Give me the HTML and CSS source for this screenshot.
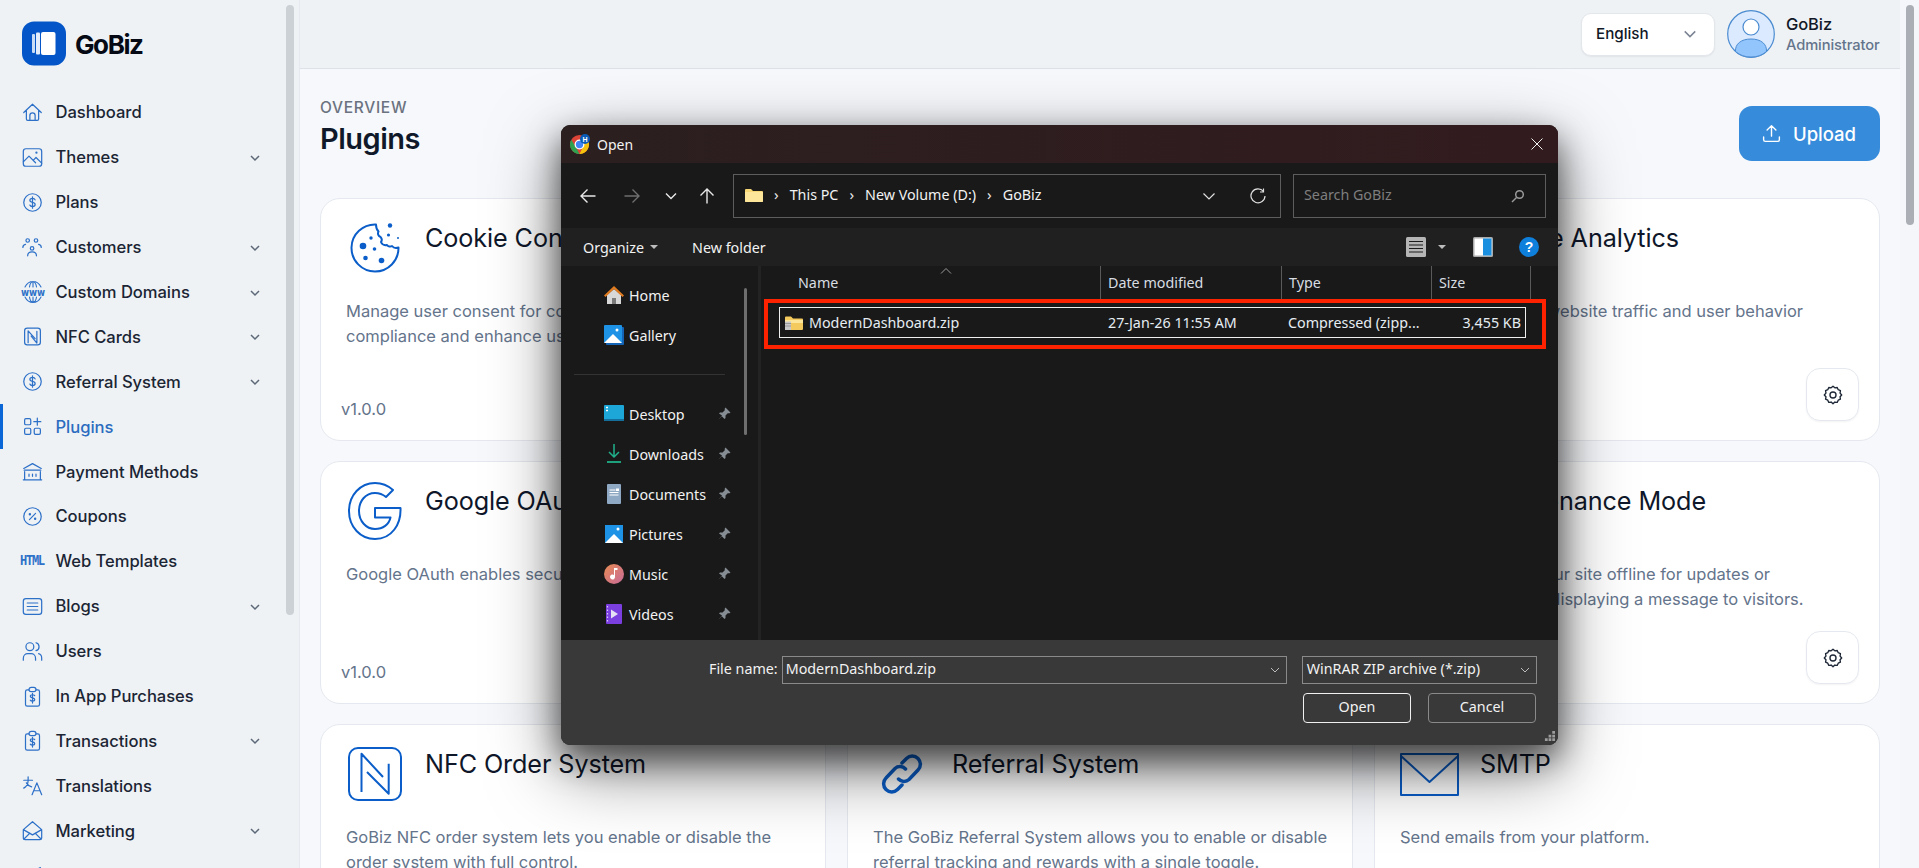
FILE: index.html
```html
<!DOCTYPE html>
<html lang="en">
<head>
<meta charset="utf-8">
<title>Plugins - GoBiz</title>
<link rel="stylesheet" href="styles.css">
</head>
<body>
<div class="app">
  <aside class="sidebar">
    <div class="side-inner">
      <div class="brand">
        <svg class="brand-mark" viewBox="0 0 44 44"><rect width="44" height="44" rx="12" fill="#0456c8"/><rect x="10" y="12.5" width="3" height="19" rx="1" fill="#c9dcf5"/><rect x="14" y="11" width="4" height="22" rx="1" fill="#e3edfb"/><rect x="19" y="10.500" width="14.500" height="23" rx="2" fill="#fff"/></svg>
        <span class="brand-name">GoBiz</span>
      </div>
      <nav class="menu">
        <a class="item"><svg class="mi" viewBox="0 0 24 24"><path d="M5 10v9.500a1.500 1.500 0 0 0 1.500 1.500h11a1.500 1.500 0 0 0 1.500-1.500V10M2 12 12 2.500 22 12M9 21v-5.500a3 3 0 0 1 6 0V21"/></svg><span>Dashboard</span></a>
        <a class="item"><svg class="mi" viewBox="0 0 24 24"><rect x="1.500" y="2" width="21" height="20" rx="3"/><path d="M1.500 17 8 10.500 15.500 18M13 15l3-3 6.500 6.500"/><circle cx="16.500" cy="6.500" r=".6"/></svg><span>Themes</span><svg class="chev" viewBox="0 0 12 12"><path d="M2 4l4 4 4-4"/></svg></a>
        <a class="item"><svg class="mi" viewBox="0 0 24 24"><circle cx="12" cy="12" r="10"/><path d="M15 9c-.4-1.200-1.500-1.800-3-1.800-1.800 0-3 .9-3 2.300s1.100 2 3 2.400 3 1.100 3 2.500-1.200 2.300-3 2.300c-1.500 0-2.600-.6-3-1.800M12 5.500v13"/></svg><span>Plans</span></a>
        <a class="item"><svg class="mi" viewBox="0 0 24 24"><circle cx="6.500" cy="4" r="2"/><circle cx="16" cy="4" r="2"/><circle cx="11.500" cy="13" r="2"/><path d="M1 12c0-2 1.300-3.200 3-3.500M22 12c0-2-1.300-3.200-3-3.500M6.500 21.500c0-3 2-4.500 5-4.500s5 1.500 5 4.500"/></svg><span>Customers</span><svg class="chev" viewBox="0 0 12 12"><path d="M2 4l4 4 4-4"/></svg></a>
        <a class="item"><svg class="mi mi-wide" viewBox="0 0 24 24"><path d="M4 7c1.500-3 4.500-5.500 8-5.500s6.500 2.500 8 5.500M4 17c1.500 3 4.500 5.500 8 5.500s6.500-2.500 8-5.500M8.500 7c.3-2.500 1.500-5 3.500-5.500 2 .5 3.200 3 3.500 5.500M8.500 17c.3 2.500 1.500 5 3.500 5.500 2-.5 3.200-3 3.500-5.500M12 1.500V7M12 17v5.500"/><text class="www" x="12" y="15.500" text-anchor="middle" textLength="24" lengthAdjust="spacingAndGlyphs">www</text></svg><span>Custom Domains</span><svg class="chev" viewBox="0 0 12 12"><path d="M2 4l4 4 4-4"/></svg></a>
        <a class="item"><svg class="mi" viewBox="0 0 24 24"><rect x="3" y="2.500" width="18" height="19" rx="3"/><path d="M7 19V5.500l8 9M17 6v13.500l-6.500-8"/></svg><span>NFC Cards</span><svg class="chev" viewBox="0 0 12 12"><path d="M2 4l4 4 4-4"/></svg></a>
        <a class="item"><svg class="mi" viewBox="0 0 24 24"><circle cx="12" cy="12" r="10"/><path d="M15 9c-.4-1.200-1.500-1.800-3-1.800-1.800 0-3 .9-3 2.300s1.100 2 3 2.400 3 1.100 3 2.500-1.200 2.300-3 2.300c-1.500 0-2.600-.6-3-1.800M12 5.500v13"/></svg><span>Referral System</span><svg class="chev" viewBox="0 0 12 12"><path d="M2 4l4 4 4-4"/></svg></a>
        <a class="item active"><svg class="mi" viewBox="0 0 24 24"><rect x="3" y="3" width="7" height="7" rx="1.500"/><rect x="3" y="14" width="7" height="7" rx="1.500"/><rect x="14" y="14" width="7" height="7" rx="1.500"/><path d="M17.500 2.500v8M13.500 6.500h8"/></svg><span>Plugins</span></a>
        <a class="item"><svg class="mi" viewBox="0 0 24 24"><path d="M2 8.500 12 3l10 5.500M2.500 10.500h19M3 12v9M21 12v9M1.500 21.500h21M8 15v2.500M12 15v2.500M16 15v2.500"/></svg><span>Payment Methods</span></a>
        <a class="item"><svg class="mi" viewBox="0 0 24 24"><circle cx="12" cy="12" r="10"/><path d="M8.500 15.500l7-7"/><circle cx="9" cy="9.500" r=".7"/><circle cx="15" cy="14.500" r=".7"/></svg><span>Coupons</span></a>
        <a class="item"><span class="html-ico">HTML</span><span>Web Templates</span></a>
        <a class="item"><svg class="mi" viewBox="0 0 24 24"><rect x="1.500" y="3" width="21" height="18" rx="3"/><path d="M6 8h12M6 12h12M6 16h12"/></svg><span>Blogs</span><svg class="chev" viewBox="0 0 12 12"><path d="M2 4l4 4 4-4"/></svg></a>
        <a class="item"><svg class="mi" viewBox="0 0 24 24"><circle cx="9" cy="6.500" r="4.500"/><path d="M1.500 22v-2c0-3.500 2.500-5.500 5-5.500h4c2.500 0 5 2 5 5.500v2M16 2c2 .5 3.500 2.200 3.500 4.500S18 10.500 16 11M19 14.500c2 .5 3.500 2.500 3.500 5V22"/></svg><span>Users</span></a>
        <a class="item"><svg class="mi" viewBox="0 0 24 24"><path d="M8 4.500H6a2 2 0 0 0-2 2V21a2 2 0 0 0 2 2h12a2 2 0 0 0 2-2V6.500a2 2 0 0 0-2-2h-2"/><rect x="8" y="1.500" width="8" height="5" rx="2.500"/><path d="M14.500 11c-.4-.7-1.300-1-2.500-1-1.500 0-2.500.7-2.500 1.800s1 1.600 2.500 1.800 2.500.8 2.500 1.900-1 1.800-2.500 1.800c-1.200 0-2.100-.4-2.500-1.100M12 8.500v11"/></svg><span>In App Purchases</span></a>
        <a class="item"><svg class="mi" viewBox="0 0 24 24"><path d="M8 4.500H6a2 2 0 0 0-2 2V21a2 2 0 0 0 2 2h12a2 2 0 0 0 2-2V6.500a2 2 0 0 0-2-2h-2"/><rect x="8" y="1.500" width="8" height="5" rx="2.500"/><path d="M14.500 11c-.4-.7-1.300-1-2.500-1-1.500 0-2.500.7-2.500 1.800s1 1.600 2.500 1.800 2.500.8 2.500 1.900-1 1.800-2.500 1.800c-1.200 0-2.100-.4-2.500-1.100M12 8.500v11"/></svg><span>Transactions</span><svg class="chev" viewBox="0 0 12 12"><path d="M2 4l4 4 4-4"/></svg></a>
        <a class="item"><svg class="mi" viewBox="0 0 24 24"><path d="M2 6h10M7 2v4c0 4-1.500 7-5 9M5 9c1 2 3 3.500 6 4.500M11.500 22.500 17 9l5.500 13.500M13.500 18h7"/></svg><span>Translations</span></a>
        <a class="item"><svg class="mi" viewBox="0 0 24 24"><path d="M1.500 11 12 2l10.500 9v9.500a2 2 0 0 1-2 2h-17a2 2 0 0 1-2-2zM1.500 11 12 17l10.500-6M2 22l7-7M22 22l-7-7"/></svg><span>Marketing</span><svg class="chev" viewBox="0 0 12 12"><path d="M2 4l4 4 4-4"/></svg></a>
        <a class="item"><svg class="mi" viewBox="0 0 24 24"><path d="M3 12l18-9-4 18-5-6z"/></svg></a>
      </nav>
    </div>
    <div class="side-scroll"><div class="side-thumb"></div></div>
  </aside>

  <main class="main">
    <header class="topbar">
      <div class="lang"><span class="lang-text">English</span><svg class="lang-chev" viewBox="0 0 16 16"><path d="M2 5l6 6 6-6"/></svg></div>
      <svg class="avatar" viewBox="0 0 48 48"><circle cx="24" cy="24" r="23.300" fill="#dbeafe" stroke="#4a8bd0" stroke-width="1.200"/><path d="M8.500 41.500C8 34 14 29 24 29s16 5 15.500 12.500A23 23 0 0 1 24 47a23 23 0 0 1-15.500-5.500z" fill="#93c5fd" stroke="#4a8bd0" stroke-width="1"/><circle cx="24" cy="17" r="8" fill="#fff" stroke="#4a8bd0" stroke-width="1.200"/></svg>
      <div class="who"><div class="who-name">GoBiz</div><div class="who-role">Administrator</div></div>
    </header>

    <section class="content">
      <div class="page-head">
        <div>
          <div class="eyebrow">OVERVIEW</div>
          <h1 class="page-title">Plugins</h1>
        </div>
        <button class="upload"><svg class="upload-ico" viewBox="0 0 24 24"><path d="M12 15V3M7 8l5-5 5 5M3 16v3a2 2 0 0 0 2 2h14a2 2 0 0 0 2-2v-3"/></svg>Upload</button>
      </div>

      <div class="cards">
        <article class="card">
          <div class="card-head">
            <div class="card-ico"><svg class="ico-cookie" viewBox="0 0 50 50"><path class="ln" d="M26 1.500a23.500 23.500 0 1 0 22.500 23c-2.500 1-5 .5-6.500-1.500-1.500 1-4 .7-5-1-2.500.5-5-.5-6-3 1-1.500 1-3.500-.5-5-2.500-1-3-3.500-2-5.500-1.500-1.500-2.500-4-2.500-7z"/><circle class="dt" cx="13" cy="23" r="3.300"/><circle class="dt" cx="21" cy="15" r="1.700"/><circle class="dt" cx="24.500" cy="26" r="1.800"/><circle class="dt" cx="15.500" cy="35" r="2.300"/><circle class="dt" cx="31.500" cy="37.500" r="2.800"/><circle class="dt" cx="40" cy="2.500" r="2.200"/><circle class="dt" cx="38.500" cy="12" r="1.600"/><circle class="dt" cx="48" cy="15" r="1"/></svg></div>
            <h2 class="card-title">Cookie Consent</h2>
          </div>
          <p class="card-desc">Manage user consent for cookies to ensure legal<br>compliance and enhance user trust.</p>
          <div class="card-foot"><span class="ver">v1.0.0</span></div>
        </article>
        <article class="card"></article>
        <article class="card">
          <div class="card-head">
            <div class="card-ico"></div>
            <h2 class="card-title">Google Analytics</h2>
          </div>
          <p class="card-desc">Track and analyze website traffic and user behavior<br>in real time.</p>
          <div class="card-foot"><span class="ver">v1.0.0</span><button class="gear-btn"><svg class="gear" viewBox="0 0 24 24"><path d="M12 2.500l2 1.700 2.600-.4 1.100 2.400 2.400 1.100-.4 2.600 1.800 2.100-1.800 2 .4 2.600-2.400 1.100-1.100 2.400-2.600-.4-2 1.800-2-1.800-2.600.4-1.100-2.400-2.400-1.100.4-2.600-1.800-2 1.800-2.100-.4-2.600 2.400-1.100 1.100-2.400 2.600.4z"/><circle cx="12" cy="12" r="3.300"/></svg></button></div>
        </article>

        <article class="card">
          <div class="card-head">
            <div class="card-ico"><svg class="ico-g" viewBox="0 0 54 60"><path class="ln" d="M27 2c7 0 13 2.500 18 7l-7 7c-3-2.500-7-4-11-4-9.500 0-16 8-16 18s7 18 16 18c8 0 14-4.500 15.500-11.500H27V27h25.500c.7 16-8.500 31-25.500 31C12.500 58 1 46 1 30S12.500 2 27 2z"/></svg></div>
            <h2 class="card-title">Google OAuth</h2>
          </div>
          <p class="card-desc">Google OAuth enables secure sign-in for your users.</p>
          <div class="card-foot"><span class="ver">v1.0.0</span></div>
        </article>
        <article class="card"></article>
        <article class="card">
          <div class="card-head">
            <div class="card-ico"></div>
            <h2 class="card-title">Maintenance Mode</h2>
          </div>
          <p class="card-desc">Temporarily take your site offline for updates or<br>maintenance while displaying a message to visitors.</p>
          <div class="card-foot"><span class="ver">v1.0.0</span><button class="gear-btn"><svg class="gear" viewBox="0 0 24 24"><path d="M12 2.500l2 1.700 2.600-.4 1.100 2.400 2.400 1.100-.4 2.600 1.800 2.100-1.800 2 .4 2.600-2.400 1.100-1.100 2.400-2.600-.4-2 1.800-2-1.800-2.600.4-1.100-2.400-2.400-1.100.4-2.600-1.800-2 1.800-2.100-.4-2.600 2.400-1.100 1.100-2.400 2.600.4z"/><circle cx="12" cy="12" r="3.300"/></svg></button></div>
        </article>

        <article class="card">
          <div class="card-head">
            <div class="card-ico"><svg class="ico-nfc" viewBox="0 0 54 54"><rect class="ln" x="1" y="1" width="52" height="52" rx="9"/><path class="ln" d="M13.500 45V6.700L35 30M40.700 16.700v30L19 25"/></svg></div>
            <h2 class="card-title">NFC Order System</h2>
          </div>
          <p class="card-desc">GoBiz NFC order system lets you enable or disable the<br>order system with full control.</p>
        </article>
        <article class="card">
          <div class="card-head">
            <div class="card-ico"><svg class="ico-link" viewBox="0 0 42 42"><path class="ln-thick" d="M17.500 26a7.500 7.500 0 0 0 10.500.500l9-9.500a8 8 0 0 0-11.500-11.500L21 10M24.500 16a7.500 7.500 0 0 0-10.500-.5l-9 9.500a8 8 0 0 0 11.500 11.500L21 32"/></svg></div>
            <h2 class="card-title">Referral System</h2>
          </div>
          <p class="card-desc">The GoBiz Referral System allows you to enable or disable<br>referral tracking and rewards with a single toggle.</p>
        </article>
        <article class="card">
          <div class="card-head">
            <div class="card-ico"><svg class="ico-mail" viewBox="0 0 59 43"><rect class="ln" x="1" y="1" width="57" height="41"/><path class="ln" d="M1 3l28.500 26L58 3"/></svg></div>
            <h2 class="card-title">SMTP</h2>
          </div>
          <p class="card-desc">Send emails from your platform.</p>
        </article>
      </div>
    </section>
  </main>

  <div class="page-scroll"><div class="page-thumb"></div></div>
</div>

<div class="dialog">
  <div class="d-title">
    <svg class="chrome" viewBox="0 0 20 20"><circle cx="9.500" cy="10.500" r="9.500" fill="#db4437"/><path d="M9.500 20A9.500 9.500 0 0 1 1.300 5.700L6 13.500z" fill="#2fa04f"/><path d="M9.500 20a9.500 9.500 0 0 0 8.200-14.300H9.500l3.500 7z" fill="#f4c20d"/><circle cx="9.500" cy="10.500" r="4.300" fill="#4285f4" stroke="#fff" stroke-width="1.300"/><circle cx="15" cy="5" r="5" fill="#0a5bb5"/><text class="badge-h" x="15" y="7.500" text-anchor="middle">H</text></svg>
    <span class="d-title-text">Open</span>
    <svg class="d-close" viewBox="0 0 12 12"><path d="M.5.500l11 11M11.500.500l-11 11"/></svg>
  </div>

  <div class="d-nav">
    <svg class="n-ico n-back" viewBox="0 0 16 16"><path d="M15.500 8H1M7.500 1.500 1 8l6.500 6.500"/></svg>
    <svg class="n-ico n-fwd" viewBox="0 0 16 16"><path d="M.5 8H15M8.500 1.500 15 8l-6.500 6.500"/></svg>
    <svg class="n-chev" viewBox="0 0 12 12"><path d="M1 3.500l5 5 5-5"/></svg>
    <svg class="n-ico n-up" viewBox="0 0 16 16"><path d="M8 15.500V1M1.500 7.500 8 1l6.500 6.500"/></svg>
    <div class="addr">
      <svg class="f-ico" viewBox="0 0 18 14"><path d="M0 2a1 1 0 0 1 1-1h5l2 2h9a1 1 0 0 1 1 1v9a1 1 0 0 1-1 1H1a1 1 0 0 1-1-1z" fill="#f8d775"/><path d="M0 4h18v9a1 1 0 0 1-1 1H1a1 1 0 0 1-1-1z" fill="#fde69a"/></svg>
      <span class="crumb-sep">›</span><span class="crumb">This PC</span><span class="crumb-sep">›</span><span class="crumb">New Volume (D:)</span><span class="crumb-sep">›</span><span class="crumb">GoBiz</span>
      <svg class="addr-chev" viewBox="0 0 12 12"><path d="M.5 3.500l5.500 5.500 5.500-5.500"/></svg>
      <svg class="addr-refresh" viewBox="0 0 16 16"><path d="M13.500 3.500A7 7 0 1 0 15 8M13.500.500v3.500H10"/></svg>
    </div>
    <div class="search"><span class="crumb">Search GoBiz</span><svg class="search-ico" viewBox="0 0 14 14"><circle cx="8.500" cy="5.500" r="3.800"/><path d="M5.500 8.500 1 13"/></svg></div>
  </div>

  <div class="d-tools">
    <span class="tool">Organize</span><i class="caret"></i>
    <span class="tool tool-new">New folder</span>
    <svg class="view-ico" viewBox="0 0 20 20"><rect width="20" height="20" rx="1.500" fill="#b5b5b5"/><path d="M3 4.500h14M3 8h14M3 11.500h14M3 15h14" stroke="#1c1c1c" stroke-width="1.200"/></svg>
    <i class="caret caret-view"></i>
    <svg class="pane-ico" viewBox="0 0 20 20"><rect width="20" height="20" rx="1.500" fill="#aaa"/><rect x="1.500" y="1.500" width="17" height="17" fill="#fff"/><rect x="10" y="1.500" width="8.500" height="17" fill="#1a8fe0"/></svg>
    <svg class="help-ico" viewBox="0 0 20 20"><circle cx="10" cy="10" r="10" fill="#0f7fdc"/><text class="help-q" x="10" y="15" text-anchor="middle">?</text></svg>
  </div>

  <div class="d-body">
    <div class="d-side">
      <div class="s-item"><svg class="s-ico" viewBox="0 0 20 20"><path d="M3 10v9h14v-9l-7-6z" fill="#d8d8d8"/><path d="M8 19v-6h4v6z" fill="#7a7a7a"/><path d="M0 10.500 10 1l10 9.500-1.500 1.500L10 4l-8.500 8z" fill="#e07b1f"/></svg><span>Home</span></div>
      <div class="s-item"><svg class="s-ico" viewBox="0 0 20 20"><rect x="2" y="2" width="18" height="18" rx="1" fill="#1464b8"/><rect width="18" height="18" rx="1" fill="#1e93e6"/><path d="M0 18 9 9l9 9z" fill="#fff"/><circle cx="13" cy="5" r="1.500" fill="#fff"/></svg><span>Gallery</span></div>
      <div class="s-sep"></div>
      <div class="s-item"><svg class="s-ico" viewBox="0 0 20 20"><rect y="1" width="20" height="16" rx="1" fill="#1da7d8"/><rect y="15" width="20" height="2" fill="#146f9c"/><path d="M2 3.500h2M2 6.500h2" stroke="#fff" stroke-width="1.500"/></svg><span>Desktop</span><svg class="pin" viewBox="0 0 14 14"><path d="M8.500.5 13.500 5.500 12 6.500 11 6 8.500 8.500 8.500 11 7.500 12 4.800 9.200 1.300 12.700 5 8.400 2 6.500 3 5.500 5.500 5.500 8 3 7.500 2z"/></svg></div>
      <div class="s-item"><svg class="s-ico" viewBox="0 0 20 20"><path d="M10 0v12M5 8l5 5 5-5" fill="none" stroke="#20b08a" stroke-width="1.500"/><path d="M3 18h14" stroke="#20b08a" stroke-width="1.800"/></svg><span>Downloads</span><svg class="pin" viewBox="0 0 14 14"><path d="M8.500.5 13.500 5.500 12 6.500 11 6 8.500 8.500 8.500 11 7.500 12 4.800 9.200 1.300 12.700 5 8.400 2 6.500 3 5.500 5.500 5.500 8 3 7.500 2z"/></svg></div>
      <div class="s-item"><svg class="s-ico" viewBox="0 0 20 20"><rect x="3" width="14" height="20" rx="1" fill="#8fa8c4"/><path d="M5.500 6h6M5.500 8.500h9M5.500 11h9" stroke="#fff" stroke-width="1"/><rect x="12" y="4.500" width="3" height="2.500" fill="#fff"/></svg><span>Documents</span><svg class="pin" viewBox="0 0 14 14"><path d="M8.500.5 13.500 5.500 12 6.500 11 6 8.500 8.500 8.500 11 7.500 12 4.800 9.200 1.300 12.700 5 8.400 2 6.500 3 5.500 5.500 5.500 8 3 7.500 2z"/></svg></div>
      <div class="s-item"><svg class="s-ico" viewBox="0 0 20 20"><rect x="1" y="1" width="18" height="18" fill="#1e93e6"/><path d="M1 19l9-9 9 9z" fill="#fff"/><circle cx="14" cy="5" r="1.500" fill="#fff"/></svg><span>Pictures</span><svg class="pin" viewBox="0 0 14 14"><path d="M8.500.5 13.500 5.500 12 6.500 11 6 8.500 8.500 8.500 11 7.500 12 4.800 9.200 1.300 12.700 5 8.400 2 6.500 3 5.500 5.500 5.500 8 3 7.500 2z"/></svg></div>
      <div class="s-item"><svg class="s-ico" viewBox="0 0 20 20"><defs><linearGradient id="mg" x1="0" y1="0" x2="1" y2="1"><stop offset="0" stop-color="#e88b52"/><stop offset="1" stop-color="#c76a9a"/></linearGradient></defs><circle cx="10" cy="10" r="10" fill="url(#mg)"/><path d="M10 4h3.500v2H11v7a2.500 2.500 0 1 1-1-2z" fill="#fff"/></svg><span>Music</span><svg class="pin" viewBox="0 0 14 14"><path d="M8.500.5 13.500 5.500 12 6.500 11 6 8.500 8.500 8.500 11 7.500 12 4.800 9.200 1.300 12.700 5 8.400 2 6.500 3 5.500 5.500 5.500 8 3 7.500 2z"/></svg></div>
      <div class="s-item"><svg class="s-ico" viewBox="0 0 20 20"><rect x="2" width="16" height="20" rx="1" fill="#7b3fe0"/><path d="M7 5.500v9l7-4.500z" fill="#e6e0f5"/><path d="M3.500 2v16" stroke="#d5c4f5" stroke-width="1.200" stroke-dasharray="1.500 2"/></svg><span>Videos</span><svg class="pin" viewBox="0 0 14 14"><path d="M8.500.5 13.500 5.500 12 6.500 11 6 8.500 8.500 8.500 11 7.500 12 4.800 9.200 1.300 12.700 5 8.400 2 6.500 3 5.500 5.500 5.500 8 3 7.500 2z"/></svg></div>
      <div class="s-thumb"></div>
    </div>
    <div class="d-split"></div>
    <div class="d-list">
      <svg class="sort-caret" viewBox="0 0 12 6"><path d="M1 5.500 6 .5l5 5"/></svg>
      <div class="l-head">
        <div class="l-col l-name">Name</div>
        <div class="l-col l-sep">Date modified</div>
        <div class="l-col l-sep">Type</div>
        <div class="l-col l-sep">Size</div>
        <div class="l-col l-sep l-end"></div>
      </div>
      <div class="l-row">
        <div class="r-name"><svg class="zip-ico" viewBox="0 0 18 14"><path d="M0 1.500a1 1 0 0 1 1-1h5l2 2h9a1 1 0 0 1 1 1v9.500a1 1 0 0 1-1 1H1a1 1 0 0 1-1-1z" fill="#f4c95d"/><path d="M0 4h18v3H0z" fill="#fde69a"/><rect y="5.500" width="6" height="8.500" fill="#c9c9c9"/><path d="M0 7.500h6M0 10h6" stroke="#8e8e8e" stroke-width=".8"/></svg><span>ModernDashboard.zip</span></div>
        <div class="r-cell">27-Jan-26 11:55 AM</div>
        <div class="r-cell">Compressed (zipp...</div>
        <div class="r-size">3,455 KB</div>
      </div>
      <div class="marker"></div>
    </div>
  </div>

  <div class="d-foot">
    <div class="f-line">
      <span class="f-label">File name:</span>
      <div class="f-input"><span class="crumb">ModernDashboard.zip</span><svg class="f-chev" viewBox="0 0 10 10"><path d="M1 3l4 4 4-4"/></svg></div>
      <div class="f-filter"><span class="crumb">WinRAR ZIP archive (*.zip)</span><svg class="f-chev" viewBox="0 0 10 10"><path d="M1 3l4 4 4-4"/></svg></div>
    </div>
    <div class="f-actions">
      <button class="d-btn d-btn-main">Open</button>
      <button class="d-btn">Cancel</button>
    </div>
    <svg class="grip" viewBox="0 0 12 12"><path d="M9 0h3v3H9zM5 4h3v3H5zM9 4h3v3H9zM1 8h3v3H1zM5 8h3v3H5zM9 8h3v3H9z"/></svg>
  </div>
</div>
</body>
</html>
```

FILE: styles.css
```css
* { box-sizing: border-box; }
html, body { margin: 0; height: 100%; overflow: hidden; }
body { font-family: Inter, "Noto Sans", sans-serif; background: #f6f8fb; color: #0f172a; }
p, h1, h2 { margin: 0; }
button { font-family: inherit; }

.app { display: flex; height: 868px; overflow: hidden; }

/* sidebar */
.sidebar { flex: 0 0 300px; display: flex; background: #eef2f5; border-right: 1px solid #e6eaf0; overflow: hidden; }
.side-inner { flex: 1; min-width: 0; }
.side-scroll { flex: 0 0 13px; padding: 5px 5px 0 0; }
.side-thumb { width: 8px; height: 610px; border-radius: 4px; background: #ccd1d6; }
.brand { display: flex; gap: 9px; padding: 21px 0 0 22px; height: 90px; align-items: flex-start; }
.brand-mark { width: 44px; height: 45px; display: block; }
.brand-name { font-size: 26px; font-weight: 700; color: #050a14; letter-spacing: -1.400px; line-height: 47px; }
.menu { display: flex; flex-direction: column; }
.item { height: 44.900px; display: flex; align-items: center; padding-left: 22px; font-size: 16.600px; font-weight: 500; color: #1b2534; position: relative; flex: none; letter-spacing: -.05px; }
.item > span { margin-left: 12.500px; }
.mi { width: 21px; height: 21px; fill: none; stroke: #2d70c8; stroke-width: 1.400; stroke-linecap: round; stroke-linejoin: round; flex: none; }
.mi-wide { width: 24px; height: 24px; margin: 0 -1.500px; stroke-width: 1.100; overflow: visible; }
.www { font: 700 10px "DejaVu Sans", sans-serif; fill: #2d70c8; stroke: none; }
.item .html-ico { margin: 0 -2px; width: 25px; flex: none; font: 700 12px/1 "Liberation Mono", monospace; letter-spacing: -1.200px; color: #2d70c8; transform: scaleY(1.250); }
.html-ico + span { margin-left: 12.500px; }
.chev { position: absolute; left: 249px; top: 17px; width: 12px; height: 12px; fill: none; stroke: #5c6878; stroke-width: 1.500; }
.item.active { color: #2b6cc0; }
.item.active::before { content: ""; position: absolute; left: 0; top: 0; bottom: 0; width: 3px; background: #0b66d6; }

/* main */
.main { flex: 1; min-width: 0; display: flex; flex-direction: column; overflow: hidden; }
.page-scroll { flex: 0 0 19px; background: #f5f6f9; padding: 5px 0 0 6px; }
.page-thumb { width: 8px; height: 220px; border-radius: 4px; background: #abafb5; }
.topbar { flex: 0 0 69px; background: #eef2f5; border-bottom: 1px solid #dde2e8; display: flex; align-items: center; justify-content: flex-end; padding: 0 20px 0 0; }
.lang { width: 134px; height: 43px; background: #fff; border: 1px solid #e3e7ec; border-radius: 10px; box-shadow: 0 1px 2px rgba(15,23,42,.06); display: flex; align-items: center; justify-content: space-between; padding: 0 17px 0 14px; font-size: 15.200px; font-weight: 500; color: #111827; }
.lang-text { position: relative; top: -1px; }
.lang-chev { width: 14px; height: 14px; fill: none; stroke: #7b8494; stroke-width: 1.700; }
.avatar { width: 48px; height: 48px; margin: 0 11px 0 12px; display: block; }
.who { width: 94px; padding-top: 1px; }
.who-name { font-size: 16.500px; font-weight: 500; line-height: 21px; color: #111827; letter-spacing: -.1px; }
.who-role { font-size: 14.700px; font-weight: 500; line-height: 20px; color: #64748b; white-space: nowrap; letter-spacing: -.1px; }

.content { flex: 1; padding: 37px 20px 0 20px; overflow: hidden; min-height: 0; }
.page-head { display: flex; justify-content: space-between; align-items: flex-start; height: 55px; margin-bottom: 37px; }
.eyebrow { font-size: 15.500px; font-weight: 500; color: #6b7280; letter-spacing: .7px; line-height: 18px; margin-top: -7px; }
.page-title { font-size: 29px; font-weight: 600; line-height: 36px; color: #10192a; letter-spacing: -.5px; margin-top: 4px; }
.upload { width: 141px; height: 55px; border: 0; border-radius: 13px; background: #368bdb; color: #fff; font-size: 18.500px; font-weight: 500; display: flex; align-items: center; justify-content: center; gap: 11px; padding: 0 2px 0 0; }
.upload-ico { width: 21px; height: 21px; fill: none; stroke: #fff; stroke-width: 1.600; stroke-linecap: round; stroke-linejoin: round; }

.cards { display: grid; grid-template-columns: repeat(3, 1fr); grid-auto-rows: 243px; gap: 20px 21px; }
.card { background: #fff; border: 1px solid #e5e9ef; border-radius: 20px; padding: 22px 20px 19px; display: flex; flex-direction: column; overflow: hidden; }
.card-head { display: flex; flex: none; height: 54px; }
.card-ico { flex: 0 0 58px; margin: 0 21px 0 5px; height: 54px; display: flex; align-items: center; justify-content: center; }
.card-ico svg { display: block; flex: none; }
.ln { fill: none; stroke: #0b5ec9; stroke-width: 2; stroke-linejoin: round; }
.ln-thick { fill: none; stroke: #0b5ec9; stroke-width: 3.500; stroke-linecap: round; }
.dt { fill: #0b5ec9; }
.ico-cookie { width: 50px; height: 50px; }
.ico-g { width: 54px; height: 60px; }
.ico-nfc { width: 54px; height: 54px; }
.ico-link { width: 42px; height: 42px; }
.ico-mail { width: 59px; height: 43px; }
.card-title { font-size: 25.200px; font-weight: 400; line-height: 34px; color: #0f172a; white-space: nowrap; letter-spacing: -.1px; }
.card-desc { margin: 23.500px 0 0 5px; font-size: 16.500px; line-height: 25px; color: #64748b; white-space: nowrap; flex: none; }
.card-foot { margin-top: auto; display: flex; justify-content: space-between; align-items: flex-end; }
.ver { font-size: 16.500px; line-height: 24px; color: #64748b; }
.gear-btn { width: 53px; height: 53px; border: 1px solid #e5e9ef; border-radius: 14px; background: #fff; display: flex; align-items: center; justify-content: center; padding: 0; box-shadow: 0 1px 2px rgba(15,23,42,.05); }
.gear { width: 22px; height: 22px; fill: none; stroke: #1f2937; stroke-width: 1.500; stroke-linejoin: round; }

/* windows dialog: floating window over the page */
.dialog { position: absolute; left: 561px; top: 125px; width: 997px; height: 620px; background: #191919; border-radius: 9px; display: flex; flex-direction: column; box-shadow: 0 14px 32px rgba(0,0,0,.55), 0 24px 70px rgba(0,0,0,.5); font-family: "Noto Sans", sans-serif; font-size: 14.300px; color: #f2f2f2; }
.d-title { flex: 0 0 38px; background: linear-gradient(90deg, #2b1f1f, #321b1e); border-radius: 9px 9px 0 0; display: flex; align-items: center; padding: 0 15px 0 9px; }
.chrome { width: 20px; height: 20px; flex: none; }
.badge-h { font: 700 7px "Liberation Sans", sans-serif; fill: #fff; }
.d-title-text { margin-left: 7px; font-size: 14px; }
.d-close { width: 12px; height: 12px; margin-left: auto; fill: none; stroke: #f0f0f0; stroke-width: 1; }

.d-nav { flex: 0 0 65px; display: flex; align-items: center; padding: 0 12px 0 19px; background: #191919; }
.n-ico { width: 16px; height: 16px; flex: none; fill: none; stroke: #e8e8e8; stroke-width: 1.400; }
.n-fwd { margin-left: 28px; stroke: #6f6f6f; }
.n-chev { width: 12px; height: 12px; margin-left: 25px; fill: none; stroke: #e8e8e8; stroke-width: 1.400; flex: none; }
.n-up { margin-left: 22px; }
.addr { margin-left: 18px; width: 548px; height: 44px; border: 1px solid #5d5d5d; display: flex; align-items: center; padding-left: 11px; }
.crumb { position: relative; top: -1.500px; white-space: nowrap; }
.f-ico { width: 18px; height: 14px; flex: none; position: relative; top: -1px; }
.crumb-sep { margin: 0 11px; font-size: 15px; line-height: 1; color: #e8e8e8; position: relative; top: -1.500px; }
.f-ico + .crumb-sep { margin-left: 11px; }
.addr-chev { width: 12px; height: 12px; margin-left: auto; fill: none; stroke: #e0e0e0; stroke-width: 1.200; }
.addr-refresh { width: 16px; height: 16px; margin: 0 14px 0 35px; fill: none; stroke: #e0e0e0; stroke-width: 1.200; }
.search { margin-left: 12px; width: 253px; height: 44px; border: 1px solid #5d5d5d; display: flex; align-items: center; justify-content: space-between; padding: 0 20px 0 10px; color: #7e7e7e; }
.search-ico { width: 14px; height: 14px; fill: none; stroke: #9a9a9a; stroke-width: 1.500; }

.d-tools { flex: 0 0 38px; background: #202020; display: flex; align-items: center; padding: 0 19px 0 22px; }
.tool { white-space: nowrap; }
.caret { width: 0; height: 0; margin-left: 6px; border: 4px solid transparent; border-top: 4px solid #bdbdbd; border-bottom: 0; flex: none; }
.tool-new { margin-left: 34px; }
.view-ico { width: 20px; height: 20px; margin-left: auto; flex: none; }
.caret-view { margin-left: 12px; }
.pane-ico { width: 20px; height: 20px; margin-left: 27px; flex: none; }
.help-ico { width: 20px; height: 20px; margin-left: 26px; flex: none; }
.help-q { font: 700 14px "Liberation Sans", sans-serif; fill: #fff; }

.d-body { flex: 0 0 374px; display: flex; background: #191919; min-height: 0; }
.d-side { flex: 0 0 197px; padding-top: 9px; position: relative; }
.s-item { height: 40px; display: flex; align-items: center; padding: 0 8px 0 43px; }
.s-ico { width: 20px; height: 20px; flex: none; margin-right: 5px; }
.pin { width: 14px; height: 14px; margin-left: auto; margin-right: 19px; fill: #868d94; flex: none; }
.s-sep { height: 1px; background: #333; margin: 19px 33px 19px 13px; }
.s-thumb { position: absolute; left: 183px; top: 22px; width: 3px; height: 147px; border-radius: 2px; background: #6e6e6e; }
.d-split { flex: 0 0 3px; background: #232323; }
.d-list { flex: 1; min-width: 0; position: relative; }
.sort-caret { position: absolute; left: 179px; top: 2px; width: 12px; height: 6px; fill: none; stroke: #9a9a9a; stroke-width: 1; }
.l-head { height: 33px; display: grid; grid-template-columns: 339px 181px 150px 99px 27px; color: #d8dde2; }
.l-col { display: flex; align-items: center; padding: 1px 0 0 7px; line-height: 1; }
.l-name { padding-left: 37px; }
.l-sep { border-left: 1px solid #5a5a5a; }
.l-row { margin: 8px 0 0 18px; width: 747px; height: 31px; border: 1px solid #f0f0f0; display: grid; grid-template-columns: 320px 180px 150px 95px; align-items: center; color: #e6edf3; }
.r-name { display: flex; align-items: center; padding-left: 5px; gap: 6px; }
.zip-ico { width: 18px; height: 14px; flex: none; }
.r-cell { padding-left: 8px; white-space: nowrap; }
.r-size { text-align: right; padding-right: 4px; white-space: nowrap; }
.marker { position: absolute; left: 3px; top: 33px; width: 782px; height: 50px; border: 4px solid #ff2200; pointer-events: none; }

.d-foot { flex: 1; background: #393939; border-radius: 0 0 9px 9px; position: relative; padding: 16px 21px 0 0; }
.f-line { display: flex; align-items: center; height: 28px; }
.f-label { margin: 0 4px 0 148px; white-space: nowrap; position: relative; top: -1.500px; }
.f-input { width: 505px; height: 28px; border: 1px solid #8a8a8a; display: flex; align-items: center; justify-content: space-between; padding: 0 6px 0 3px; }
.f-filter { margin-left: 15px; width: 235px; height: 28px; border: 1px solid #8a8a8a; display: flex; align-items: center; justify-content: space-between; padding: 0 6px 0 4px; }
.f-chev { width: 10px; height: 10px; fill: none; stroke: #bdbdbd; stroke-width: 1; flex: none; }
.f-actions { display: flex; justify-content: flex-end; gap: 17px; margin: 9px 1px 0 0; }
.d-btn { width: 108px; height: 30px; background: #393939; border: 1px solid #8a8a8a; border-radius: 4px; color: #f2f2f2; font-family: "Noto Sans", sans-serif; font-size: 14.300px; padding: 0 0 3px; }
.d-btn-main { border-color: #f0f0f0; }
.grip { position: absolute; right: 3px; bottom: 3px; width: 11px; height: 11px; fill: #9c9c9c; }
```
